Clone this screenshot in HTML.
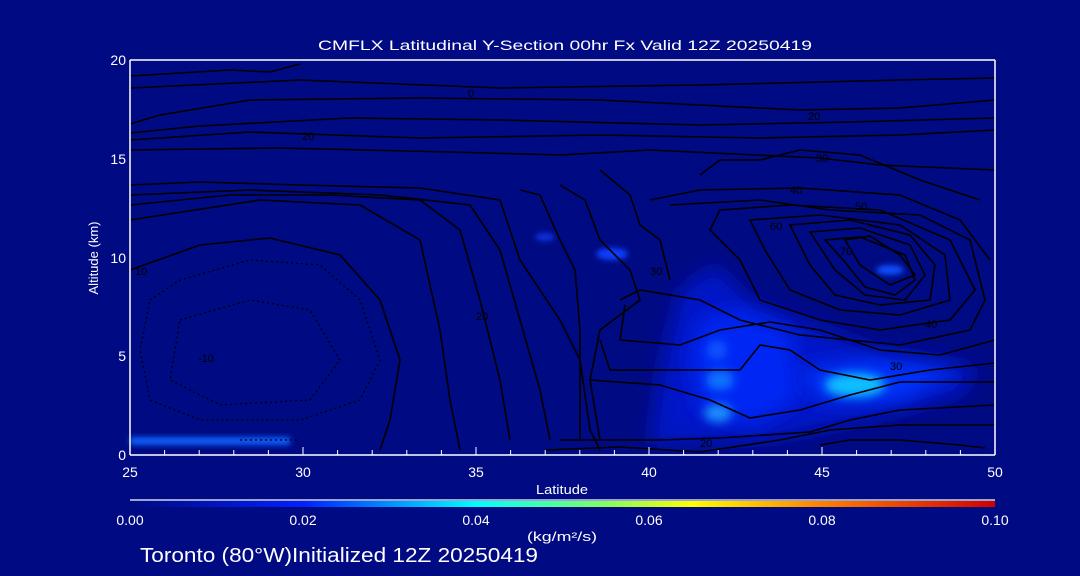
<!DOCTYPE html>
<html><head><meta charset="utf-8"><style>
html,body{margin:0;padding:0;background:#000a82;width:1080px;height:576px;overflow:hidden}
svg{display:block}
text{font-family:"Liberation Sans",sans-serif;fill:#fff}
</style></head><body>
<svg width="1080" height="576" viewBox="0 0 1080 576">
<defs>
<filter id="b10" x="-50%" y="-50%" width="200%" height="200%"><feGaussianBlur stdDeviation="10"/></filter>
<filter id="b5" x="-50%" y="-50%" width="200%" height="200%"><feGaussianBlur stdDeviation="5"/></filter>
<filter id="b3" x="-50%" y="-50%" width="200%" height="200%"><feGaussianBlur stdDeviation="3"/></filter>
<linearGradient id="cb" x1="0" x2="1" y1="0" y2="0">
<stop offset="0" stop-color="#000a82"/><stop offset="0.2" stop-color="#0020ff"/>
<stop offset="0.4" stop-color="#00ffff"/><stop offset="0.55" stop-color="#80ff60"/>
<stop offset="0.65" stop-color="#ffff00"/><stop offset="0.8" stop-color="#ff8000"/>
<stop offset="1" stop-color="#d00000"/></linearGradient>
</defs>
<rect width="1080" height="576" fill="#000a82"/>
<g>
<polygon filter="url(#b10)" fill="#0016c8" points="680,290 715,265 750,300 800,320 880,350 980,368 960,395 870,420 770,440 650,445 660,370"/>
<polygon filter="url(#b10)" fill="#0028f4" points="700,320 740,310 790,330 800,400 750,425 700,410 690,360"/>
<polygon filter="url(#b10)" fill="#0034ff" points="800,370 870,360 960,370 900,400 820,400"/>
<ellipse filter="url(#b5)" cx="855" cy="385" rx="30" ry="12" fill="#10c0ff"/>
<ellipse filter="url(#b5)" cx="718" cy="413" rx="14" ry="9" fill="#1c90ff"/>
<ellipse filter="url(#b5)" cx="720" cy="380" rx="14" ry="10" fill="#1074ff"/>
<ellipse filter="url(#b5)" cx="717" cy="350" rx="10" ry="10" fill="#0c54ff"/>
<ellipse filter="url(#b3)" cx="890" cy="270" rx="14" ry="5" fill="#1050ff"/>
<ellipse filter="url(#b3)" cx="612" cy="254" rx="16" ry="6" fill="#1040ff"/>
<ellipse filter="url(#b3)" cx="545" cy="237" rx="10" ry="4" fill="#0830e0"/>
<rect filter="url(#b3)" x="130" y="437" width="160" height="8" fill="#1060ff"/>
</g>
<g fill="none" stroke="#000" stroke-width="1.6">
<path d="M130,76 L230,70 L270,72 L300,64"/>
<path d="M130,88 L300,80 L500,88 L700,85 L900,80 L995,78"/>
<path d="M130,124 L160,115 L250,100 L420,98 L600,100 L800,110 L900,108 L995,100"/>
<path d="M130,133 L200,126 L350,118 L500,120 L700,125 L850,122 L995,118"/>
<path d="M130,140 L250,132 L420,138 L600,135 L760,138 L900,135 L995,130"/>
<path d="M130,150 L280,148 L450,152 L560,155 L650,150 L820,158 L880,165 L995,170"/>
<path d="M130,185 L200,182 L300,185 L420,188 L500,200 L520,260 L560,320 L580,360 L590,430 L600,450"/>
<path d="M130,195 L250,190 L380,195 L470,205 L500,250 L520,320 L540,390 L550,440"/>
<path d="M130,205 L230,195 L330,195 L420,200 L460,230 L480,300 L500,380 L510,440"/>
<path d="M130,220 L260,200 L360,205 L420,240 L440,330 L450,400 L460,450"/>
<path d="M130,270 L200,245 L270,238 L340,255 L380,300 L400,360 L390,420 L380,450"/>
<path d="M560,185 L585,200 L600,240 L630,270 L640,300 L600,330 L590,380 L600,440"/>
<path d="M520,190 L540,195 L560,240 L575,270 L580,330 L580,440"/>
<path d="M700,175 L720,160 L760,160 L800,150 L860,155 L920,180 L980,200"/>
<path d="M650,200 L700,190 L800,188 L900,195 L960,220 L990,260"/>
<path d="M670,205 L760,200 L830,210 L920,215 L970,240 L985,300 L970,330 L900,345 L800,335 L740,320 L700,300 L640,290 L620,300"/>
<path d="M720,210 L790,205 L880,210 L950,240 L975,290 L950,320 L880,330 L820,320 L760,300 L740,260 L710,230 Z"/>
<path d="M750,220 L820,215 L900,225 L945,255 L950,300 L900,315 L840,310 L790,290 L765,250 Z"/>
<path d="M790,225 L850,220 L910,235 L935,265 L930,300 L880,305 L835,295 L810,265 Z"/>
<path d="M810,232 L860,228 L910,245 L925,275 L905,300 L865,295 L835,270 Z"/>
<path d="M825,240 L860,237 L905,255 L915,280 L895,295 L865,287 L845,262 Z"/>
<path d="M845,240 L870,236 L900,255 L915,275 L890,285 L860,265 Z"/>
<path d="M625,305 L620,340 L680,345 L720,330 L770,322 L820,330 L880,350 L940,355 L995,340"/>
<path d="M600,340 L610,370 L680,370 L740,370 L760,345 L790,350 L820,370 L870,380 L930,370 L995,363"/>
<path d="M590,380 L660,385 L710,400 L750,418 L800,410 L850,395 L900,382 L995,382"/>
<path d="M560,440 L660,440 L720,438 L810,432 L850,420 L900,410 L995,405"/>
<path d="M545,450 L620,447 L700,452 L780,440 L830,430 L900,425 L995,425"/>
<path d="M820,445 L850,440 L900,440 L960,445 L985,448"/>
<path d="M600,170 L630,195 L640,225 L660,240 L670,280"/>
</g>
<g fill="none" stroke="#000" stroke-width="1.2" stroke-dasharray="2,3">
<path d="M150,300 L180,280 L250,260 L320,265 L360,300 L380,360 L360,400 L300,420 L200,420 L150,400 L140,350 Z"/>
<path d="M180,320 L250,300 L310,310 L340,360 L310,400 L220,405 L170,380 Z"/>
<path d="M240,440 L300,440"/>
</g>
<g font-size="11">
<text x="468" y="97" style="fill:#000">0</text>
<text x="302" y="140" style="fill:#000">20</text>
<text x="808" y="120" style="fill:#000">20</text>
<text x="816" y="162" style="fill:#000">30</text>
<text x="790" y="194" style="fill:#000">40</text>
<text x="855" y="210" style="fill:#000">50</text>
<text x="770" y="230" style="fill:#000">60</text>
<text x="840" y="255" style="fill:#000">70</text>
<text x="925" y="328" style="fill:#000">40</text>
<text x="890" y="370" style="fill:#000">30</text>
<text x="700" y="447" style="fill:#000">20</text>
<text x="135" y="275" style="fill:#000">10</text>
<text x="198" y="362" style="fill:#000">-10</text>
<text x="476" y="320" style="fill:#000">20</text>
<text x="650" y="275" style="fill:#000">30</text>
</g>
<g stroke="#fff" stroke-width="1.5" fill="none">
<line x1="130" y1="60" x2="995" y2="60"/>
<line x1="130" y1="455" x2="995" y2="455"/>
<line x1="130" y1="60" x2="130" y2="455"/>
<line x1="995" y1="60" x2="995" y2="455"/>
</g>
<g stroke="#fff" stroke-width="1">
<path d="M164.6,455v-5M199.2,455v-5M233.8,455v-5M268.4,455v-5M303,455v-8M337.6,455v-5M372.2,455v-5M406.8,455v-5M441.4,455v-5M476,455v-8M510.6,455v-5M545.2,455v-5M579.8,455v-5M614.4,455v-5M649,455v-8M683.6,455v-5M718.2,455v-5M752.8,455v-5M787.4,455v-5M822,455v-8M856.6,455v-5M891.2,455v-5M925.8,455v-5M960.4,455v-5"/>
</g>
<g font-size="14">
<text x="318" y="50" textLength="494" lengthAdjust="spacingAndGlyphs">CMFLX Latitudinal Y-Section 00hr  Fx Valid 12Z 20250419</text>
<text x="126" y="65" text-anchor="end">20</text>
<text x="126" y="164" text-anchor="end">15</text>
<text x="126" y="263" text-anchor="end">10</text>
<text x="126" y="361" text-anchor="end">5</text>
<text x="126" y="460" text-anchor="end">0</text>
<text x="130" y="477" text-anchor="middle">25</text>
<text x="303" y="477" text-anchor="middle">30</text>
<text x="476" y="477" text-anchor="middle">35</text>
<text x="649" y="477" text-anchor="middle">40</text>
<text x="822" y="477" text-anchor="middle">45</text>
<text x="995" y="477" text-anchor="middle">50</text>
<text x="536" y="494" font-size="13" textLength="52" lengthAdjust="spacingAndGlyphs">Latitude</text>
<text transform="translate(98,258) rotate(-90)" text-anchor="middle" font-size="13">Altitude (km)</text>
</g>
<line x1="130" y1="500" x2="995" y2="500" stroke="#fff" stroke-width="1.2"/>
<rect x="130" y="501" width="865" height="6" fill="url(#cb)"/>
<g font-size="14">
<text x="130" y="525" text-anchor="middle">0.00</text>
<text x="303" y="525" text-anchor="middle">0.02</text>
<text x="476" y="525" text-anchor="middle">0.04</text>
<text x="649" y="525" text-anchor="middle">0.06</text>
<text x="822" y="525" text-anchor="middle">0.08</text>
<text x="995" y="525" text-anchor="middle">0.10</text>
<text x="527" y="541" font-size="13" textLength="70" lengthAdjust="spacingAndGlyphs">(kg/m²/s)</text>
<text x="140" y="562" font-size="20" textLength="398" lengthAdjust="spacingAndGlyphs">Toronto (80°W)Initialized 12Z 20250419</text>
</g>
</svg>
</body></html>
